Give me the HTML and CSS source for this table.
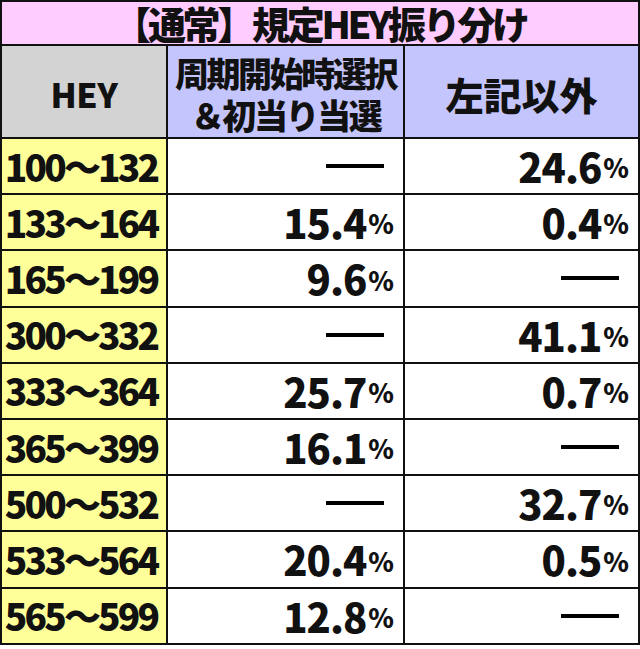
FILE: index.html
```html
<!DOCTYPE html>
<html lang="ja">
<head>
<meta charset="utf-8">
<title>【通常】規定HEY振り分け</title>
<link rel="stylesheet" href="styles.css">
</head>
<body>
<div class="table">
  <div class="title">【通常】規定HEY振り分け</div>
  <div class="head head-gray">HEY</div>
  <div class="head head-multi"><span class="line">周期開始時選択</span><span class="line">＆初当り当選</span></div>
  <div class="head head-big">左記以外</div>

  <div class="range">100～132</div>
  <div class="val"><span class="dash"></span></div>
  <div class="val">24.6<span class="pct">%</span></div>

  <div class="range">133～164</div>
  <div class="val">15.4<span class="pct">%</span></div>
  <div class="val">0.4<span class="pct">%</span></div>

  <div class="range">165～199</div>
  <div class="val">9.6<span class="pct">%</span></div>
  <div class="val"><span class="dash"></span></div>

  <div class="range">300～332</div>
  <div class="val"><span class="dash"></span></div>
  <div class="val">41.1<span class="pct">%</span></div>

  <div class="range">333～364</div>
  <div class="val">25.7<span class="pct">%</span></div>
  <div class="val">0.7<span class="pct">%</span></div>

  <div class="range">365～399</div>
  <div class="val">16.1<span class="pct">%</span></div>
  <div class="val"><span class="dash"></span></div>

  <div class="range">500～532</div>
  <div class="val"><span class="dash"></span></div>
  <div class="val">32.7<span class="pct">%</span></div>

  <div class="range">533～564</div>
  <div class="val">20.4<span class="pct">%</span></div>
  <div class="val">0.5<span class="pct">%</span></div>

  <div class="range">565～599</div>
  <div class="val">12.8<span class="pct">%</span></div>
  <div class="val"><span class="dash"></span></div>
</div>
</body>
</html>
```

FILE: styles.css
```css
html, body {
  margin: 0;
  padding: 0;
  background: #ffffff;
}

.table {
  width: 640px;
  box-sizing: border-box;
  display: grid;
  grid-template-columns: 164px 235px 233px;
  grid-template-rows: 42px 91px repeat(9, 54.2px);
  gap: 2px;
  padding: 2px;
  background: #111111;
  font-family: "Noto Sans CJK JP", "Noto Sans", sans-serif;
  font-weight: 900;
  color: #111111;
}

.table > div {
  display: flex;
  align-items: center;
  white-space: nowrap;
  min-width: 0;
}

.title {
  grid-column: 1 / 4;
  background: #ffccff;
  justify-content: center;
  font-size: 38px;
  letter-spacing: -3.3px;
  line-height: 42px;
}

.head {
  justify-content: center;
  background: #c5c5fd;
  text-align: center;
  line-height: 1;
}

.head-gray {
  background: #d3d3d3;
  font-size: 34px;
  letter-spacing: -0.5px;
  padding-top: 4px;
}

.head-multi {
  flex-direction: column;
  font-size: 34px;
  letter-spacing: -2.4px;
  padding-top: 4px;
}

.head-multi .line {
  display: block;
  line-height: 42px;
  height: 42px;
}

.head-big {
  font-size: 38px;
  letter-spacing: 0;
  padding-top: 4px;
}

.range {
  background: #ffff99;
  justify-content: center;
  font-size: 37px;
  letter-spacing: -2.8px;
  line-height: 1;
  padding-right: 6px;
}

.val {
  background: #ffffff;
  justify-content: flex-end;
  padding-right: 9px;
  font-size: 40px;
  letter-spacing: -1px;
  line-height: 1;
}

.pct {
  font-size: 26px;
  letter-spacing: 0;
  margin-left: 2px;
  align-self: flex-end;
  margin-bottom: 13px;
}

.dash {
  display: block;
  width: 58px;
  height: 4px;
  background: #000000;
  margin-right: 10px;
}
```
